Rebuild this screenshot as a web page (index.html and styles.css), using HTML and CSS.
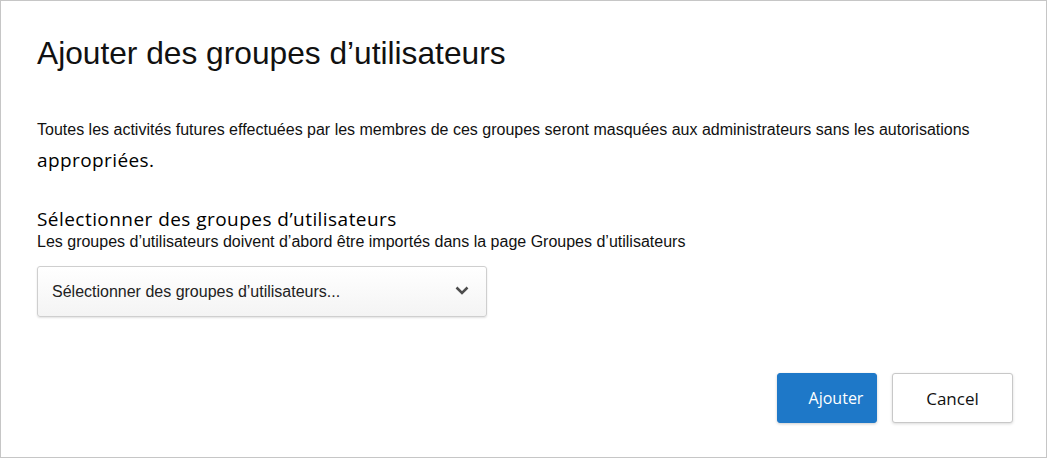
FILE: index.html
```html
<!DOCTYPE html>
<html lang="fr">
<head>
<meta charset="utf-8">
<title>Ajouter des groupes d’utilisateurs</title>
<link rel="stylesheet" href="styles.css">
</head>
<body>
<div class="dialog">
  <h1 class="title">Ajouter des groupes d’utilisateurs</h1>
  <p class="desc">Toutes les activités futures effectuées par les membres de ces groupes seront masquées aux administrateurs sans les autorisations <span class="desc-end">appropriées.</span></p>
  <div class="field">
    <div class="field-label">Sélectionner des groupes d’utilisateurs</div>
    <div class="field-help">Les groupes d’utilisateurs doivent d’abord être importés dans la page Groupes d’utilisateurs</div>
    <div class="select">
      <span class="select-text">Sélectionner des groupes d’utilisateurs...</span>
      <svg class="chevron" width="14" height="9" viewBox="0 0 14 9"><path d="M1.5 1.5 L7 7 L12.5 1.5" fill="none" stroke="#4d4d4d" stroke-width="2.5"/></svg>
    </div>
  </div>
  <div class="actions">
    <button class="btn btn-primary">Ajouter</button>
    <button class="btn btn-default">Cancel</button>
  </div>
</div>
</body>
</html>
```
FILE: styles.css
```css
html, body {
  margin: 0;
  padding: 0;
  background: #fff;
}
.dialog {
  box-sizing: border-box;
  width: 1047px;
  height: 458px;
  border: 1px solid #c6c6c6;
  padding: 0 33px 0 36px;
  font-family: "Liberation Sans", Arial, sans-serif;
  color: #111;
  display: flex;
  flex-direction: column;
}
.title {
  margin: 34px 0 0 0;
  font-weight: normal;
  font-size: 31.7px;
  line-height: 36px;
  color: #111;
}
.desc {
  margin: 44px 0 0 0;
  font-size: 16px;
  line-height: 30px;
}
.desc-end {
  font-family: "Open Sans", "Noto Sans", sans-serif;
  font-size: 19px;
  letter-spacing: 0.4px;
  color: #000;
}
.field {
  margin-top: 30px;
}
.field-label {
  font-family: "Open Sans", "Noto Sans", sans-serif;
  font-size: 19px;
  letter-spacing: 0.45px;
  line-height: 24px;
  color: #000;
}
.field-help {
  font-size: 16px;
  line-height: 22px;
}
.select {
  box-sizing: border-box;
  margin-top: 13px;
  width: 450px;
  height: 51px;
  border: 1px solid #cfcfcf;
  border-radius: 3px;
  background: linear-gradient(#ffffff, #f4f4f4);
  box-shadow: 0 1px 2px rgba(0,0,0,0.12);
  display: flex;
  align-items: center;
  justify-content: space-between;
  padding: 0 17px 0 14px;
}
.select-text {
  font-size: 16px;
  color: #222;
}
.chevron {
  margin-top: -2px;
}
.actions {
  margin-top: auto;
  margin-bottom: 34px;
  display: flex;
  justify-content: flex-end;
  gap: 15px;
}
.btn {
  box-sizing: border-box;
  height: 50px;
  border-radius: 3px;
  font-family: "Open Sans", "Noto Sans", sans-serif;
  font-size: 16px;
  cursor: pointer;
}
.btn-primary {
  width: 100px;
  padding: 0 0 0 18px;
  background: #1e78c8;
  color: #fff;
  border: 1px solid #1e78c8;
  box-shadow: 0 1px 3px rgba(0,0,0,0.2);
}
.btn-default {
  width: 121px;
  background: #fff;
  color: #111;
  border: 1px solid #c8c8c8;
  box-shadow: 0 1px 3px rgba(0,0,0,0.15);
  font-size: 17px;
}
```
